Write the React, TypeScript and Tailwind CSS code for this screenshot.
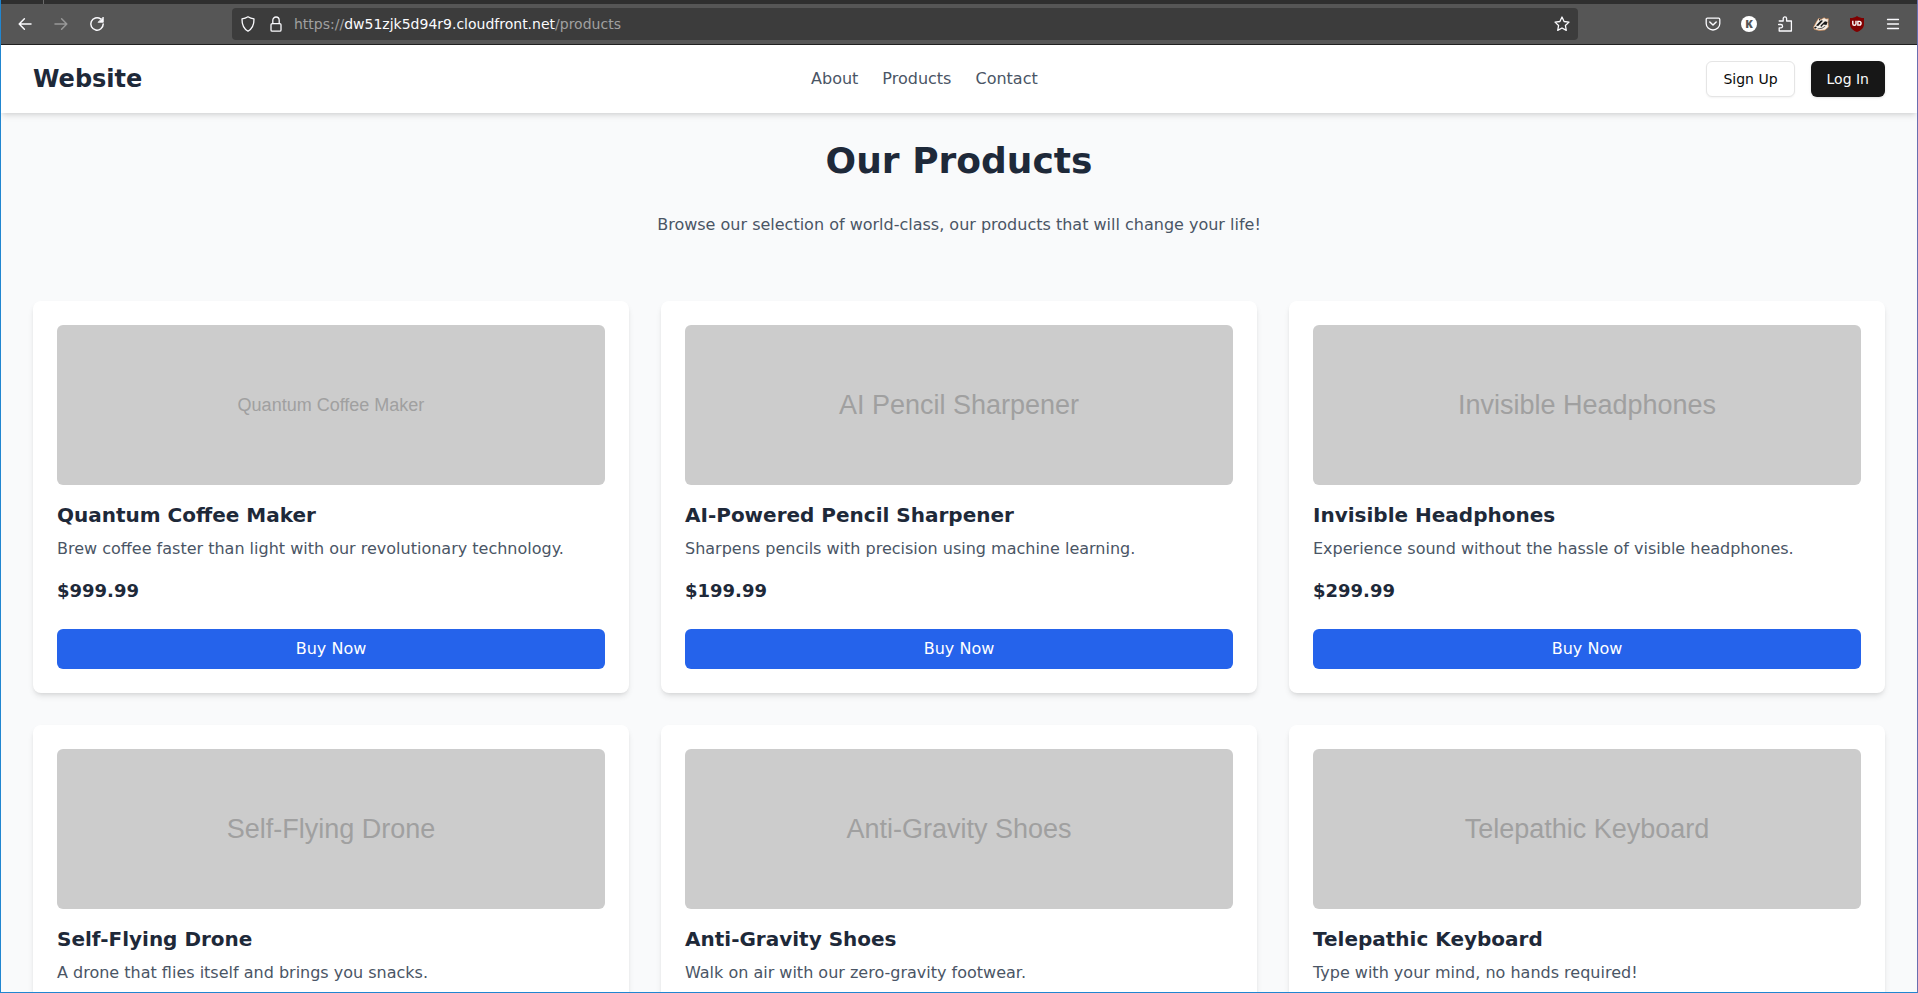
import type { ReactNode } from "react";

type Product = {
  name: string;
  label: string;
  smallLabel?: boolean;
  description: string;
  price?: string;
};

const products: Product[] = [
  {
    name: "Quantum Coffee Maker",
    label: "Quantum Coffee Maker",
    smallLabel: true,
    description: "Brew coffee faster than light with our revolutionary technology.",
    price: "$999.99",
  },
  {
    name: "AI-Powered Pencil Sharpener",
    label: "AI Pencil Sharpener",
    description: "Sharpens pencils with precision using machine learning.",
    price: "$199.99",
  },
  {
    name: "Invisible Headphones",
    label: "Invisible Headphones",
    description: "Experience sound without the hassle of visible headphones.",
    price: "$299.99",
  },
  {
    name: "Self-Flying Drone",
    label: "Self-Flying Drone",
    description: "A drone that flies itself and brings you snacks.",
  },
  {
    name: "Anti-Gravity Shoes",
    label: "Anti-Gravity Shoes",
    description: "Walk on air with our zero-gravity footwear.",
  },
  {
    name: "Telepathic Keyboard",
    label: "Telepathic Keyboard",
    description: "Type with your mind, no hands required!",
  },
];

function Icon({ children, className = "" }: { children: ReactNode; className?: string }) {
  return (
    <svg
      viewBox="0 0 16 16"
      className={`size-4 shrink-0 ${className}`}
      fill="none"
      stroke="currentColor"
      strokeWidth="1.3"
      strokeLinecap="round"
      strokeLinejoin="round"
      aria-hidden="true"
    >
      {children}
    </svg>
  );
}

function ToolButton({ label, children, disabled }: { label: string; children: ReactNode; disabled?: boolean }) {
  return (
    <button
      type="button"
      aria-label={label}
      disabled={disabled}
      className="flex size-8 items-center justify-center rounded text-[#fbfbfe] disabled:text-[#989898]"
    >
      {children}
    </button>
  );
}

function BrowserBar() {
  return (
    <div className="shrink-0 border-b border-[#202020] bg-[#565656]">
      <div className="flex h-1 bg-[#2f2f2f]">
        <div className="w-[43px] border-r border-[#6a6a6a]" />
      </div>
      <div className="flex h-10 items-center">
        <div className="flex w-[231px] shrink-0 gap-1 pl-2">
          <ToolButton label="Back">
            <Icon>
              <path strokeWidth="1.5" d="M14 8H2.4M7.4 2.8 2.2 8l5.2 5.2" />
            </Icon>
          </ToolButton>
          <ToolButton label="Forward" disabled>
            <Icon>
              <path strokeWidth="1.5" d="M2 8h11.6M8.6 2.8 13.8 8l-5.2 5.2" />
            </Icon>
          </ToolButton>
          <ToolButton label="Reload">
            <Icon>
              <path strokeWidth="1.5" d="M11.6 2.9A6.2 6.2 0 1 0 14.2 8" />
              <path fill="currentColor" strokeWidth="0.8" d="M14.3 1.4v4.9H9.4z" />
            </Icon>
          </ToolButton>
        </div>
        <div className="flex h-8 flex-1 items-center rounded bg-[#3c3c3c] text-[#fbfbfe]">
          <Icon className="ml-2">
            <path d="M8 .8c1.9 1.2 3.7 1.8 6 2.1.1 5-1.7 9.700-6 12.300C3.700 12.600 1.900 7.900 2 2.900 4.300 2.600 6.100 2 8 .8z" />
          </Icon>
          <Icon className="ml-3">
            <rect x="3" y="7.600" width="10" height="7.600" rx="1.200" />
            <path d="M4.800 7.600V4.200a3.200 3.200 0 0 1 6.400 0v3.400" />
          </Icon>
          <p className="ml-2.5 flex-1 text-sm text-[#a0a0a0]">
            https://<span className="text-[#fbfbfe]">dw51zjk5d94r9.cloudfront.net</span>/products
          </p>
          <button type="button" aria-label="Bookmark this page" className="mr-2 flex">
            <Icon>
              <path d="m8 1 2.100 4.500 4.900.6-3.600 3.400.9 4.900L8 12l-4.300 2.400.9-4.900L1 6.100l4.900-.6z" />
            </Icon>
          </button>
        </div>
        <div className="flex w-[339px] shrink-0 justify-end gap-1 pr-2">
          <ToolButton label="Save to Pocket">
            <Icon>
              <path d="M2.400 2.200h11.200a1.200 1.200 0 0 1 1.200 1.200V7.400a6.800 6.600 0 0 1-13.600 0V3.400a1.200 1.200 0 0 1 1.200-1.200z" />
              <path strokeWidth="1.500" d="M4.800 6 8 9l3.200-3" />
            </Icon>
          </ToolButton>
          <ToolButton label="Account">
            <span className="flex size-4 items-center justify-center rounded-full bg-white font-['Open_Sans',sans-serif] text-[11px] leading-4 font-extrabold text-[#565656]">
              K
            </span>
          </ToolButton>
          <ToolButton label="Extensions">
            <Icon>
              <path d="M2.200 5h4V2.600a1.700 1.700 0 0 1 3.400 0V5h4.800v10H2.200v-3.200h1.700a1.600 1.600 0 0 0 0-3.300H1.600" />
            </Icon>
          </ToolButton>
          <ToolButton label="Privacy Badger">
            <Icon>
              <path fill="#f3eee6" stroke="#dd8a4a" strokeWidth=".6" d="M.6 11 3.600 5.500l2-3 2.500 1 3-1.800L13 3l2.400-.3L15 6l.4 5-3.400 3-6 .5-4.500-1.200z" />
              <path stroke="none" fill="#1a1a1a" d="M3 9.500 8 4.200l2 .6L5.200 10zM7.500 9.500 12 5.200l2.500.8-1 3-3-.4L8 11.200zM1 11.200l2-.8.8 1.300L2 12.700zM6 3l1.500.2L6 5z" />
              <path stroke="#222" strokeWidth=".7" d="m5 12.800 4-.5 3-2" />
            </Icon>
          </ToolButton>
          <ToolButton label="uBlock Origin">
            <svg viewBox="0 0 16 16" className="size-4" aria-hidden="true">
              <path fill="#800000" d="M8 0c2 1.600 4 2 7 2v6c0 4-3 6.500-7 8-4-1.500-7-4-7-8V2c3 0 5-.4 7-2z" />
              <path
                fill="none"
                stroke="#fff"
                strokeWidth="1.400"
                d="M3.800 4.800V7.700a1.600 1.600 0 0 0 3.200 0V4.800M8.900 5.400v3.700h1.300a1.800 1.800 0 0 0 0-3.700z"
              />
            </svg>
          </ToolButton>
          <ToolButton label="Open application menu">
            <Icon>
              <path d="M2.500 3.500h11M2.500 8h11M2.500 12.500h11" />
            </Icon>
          </ToolButton>
        </div>
      </div>
    </div>
  );
}

function SiteHeader() {
  return (
    <header className="relative flex items-center justify-between bg-white px-8 py-4 shadow-md">
      <a href="#" className="text-2xl font-bold text-gray-800">
        Website
      </a>
      <nav className="flex gap-6 text-gray-600">
        <a href="#about">About</a>
        <a href="#products">Products</a>
        <a href="#contact">Contact</a>
      </nav>
      <div className="flex gap-4 text-sm font-medium">
        <button type="button" className="h-9 rounded-md border border-neutral-200 bg-white px-4 text-neutral-950 shadow-xs">
          Sign Up
        </button>
        <button type="button" className="h-9 rounded-md bg-neutral-900 px-4 text-neutral-50 shadow-sm">
          Log In
        </button>
      </div>
    </header>
  );
}

function ProductCard({ product }: { product: Product }) {
  return (
    <article className="rounded-lg bg-white p-6 shadow-md">
      <div
        className={`mb-4 flex h-40 items-center justify-center rounded-md bg-[#cccccc] font-['Liberation_Sans',Arial,sans-serif] text-[#a0a0a0] ${
          product.smallLabel ? "text-[18px]" : "text-[27px]"
        }`}
      >
        {product.label}
      </div>
      <h2 className="mb-2 text-xl font-bold text-gray-800">{product.name}</h2>
      <p className="text-gray-600">{product.description}</p>
      {product.price && (
        <div className="mt-4">
          <p className="mb-6 text-lg font-bold text-gray-800">{product.price}</p>
          <button type="button" className="block h-10 w-full rounded-md bg-[#2563eb] text-white">
            Buy Now
          </button>
        </div>
      )}
    </article>
  );
}

export default function App() {
  return (
    <div className="flex h-screen flex-col border-x border-b border-r-[#6a6fb0] border-b-[#2186d0] border-l-[#2186d0] bg-gray-50 font-['DejaVu_Sans',sans-serif]">
      <BrowserBar />
      <div className="flex-1 overflow-y-auto [scrollbar-width:none]">
        <SiteHeader />
        <main className="px-8 pt-7">
          <h1 className="mb-8 text-center text-4xl font-bold text-gray-800">Our Products</h1>
          <p className="mb-16 text-center text-gray-600">
            Browse our selection of world-class, our products that will change your life!
          </p>
          <div className="grid grid-cols-1 gap-8 pb-16 md:grid-cols-2 lg:grid-cols-3">
            {products.map((product) => (
              <ProductCard key={product.name} product={product} />
            ))}
          </div>
        </main>
      </div>
    </div>
  );
}
